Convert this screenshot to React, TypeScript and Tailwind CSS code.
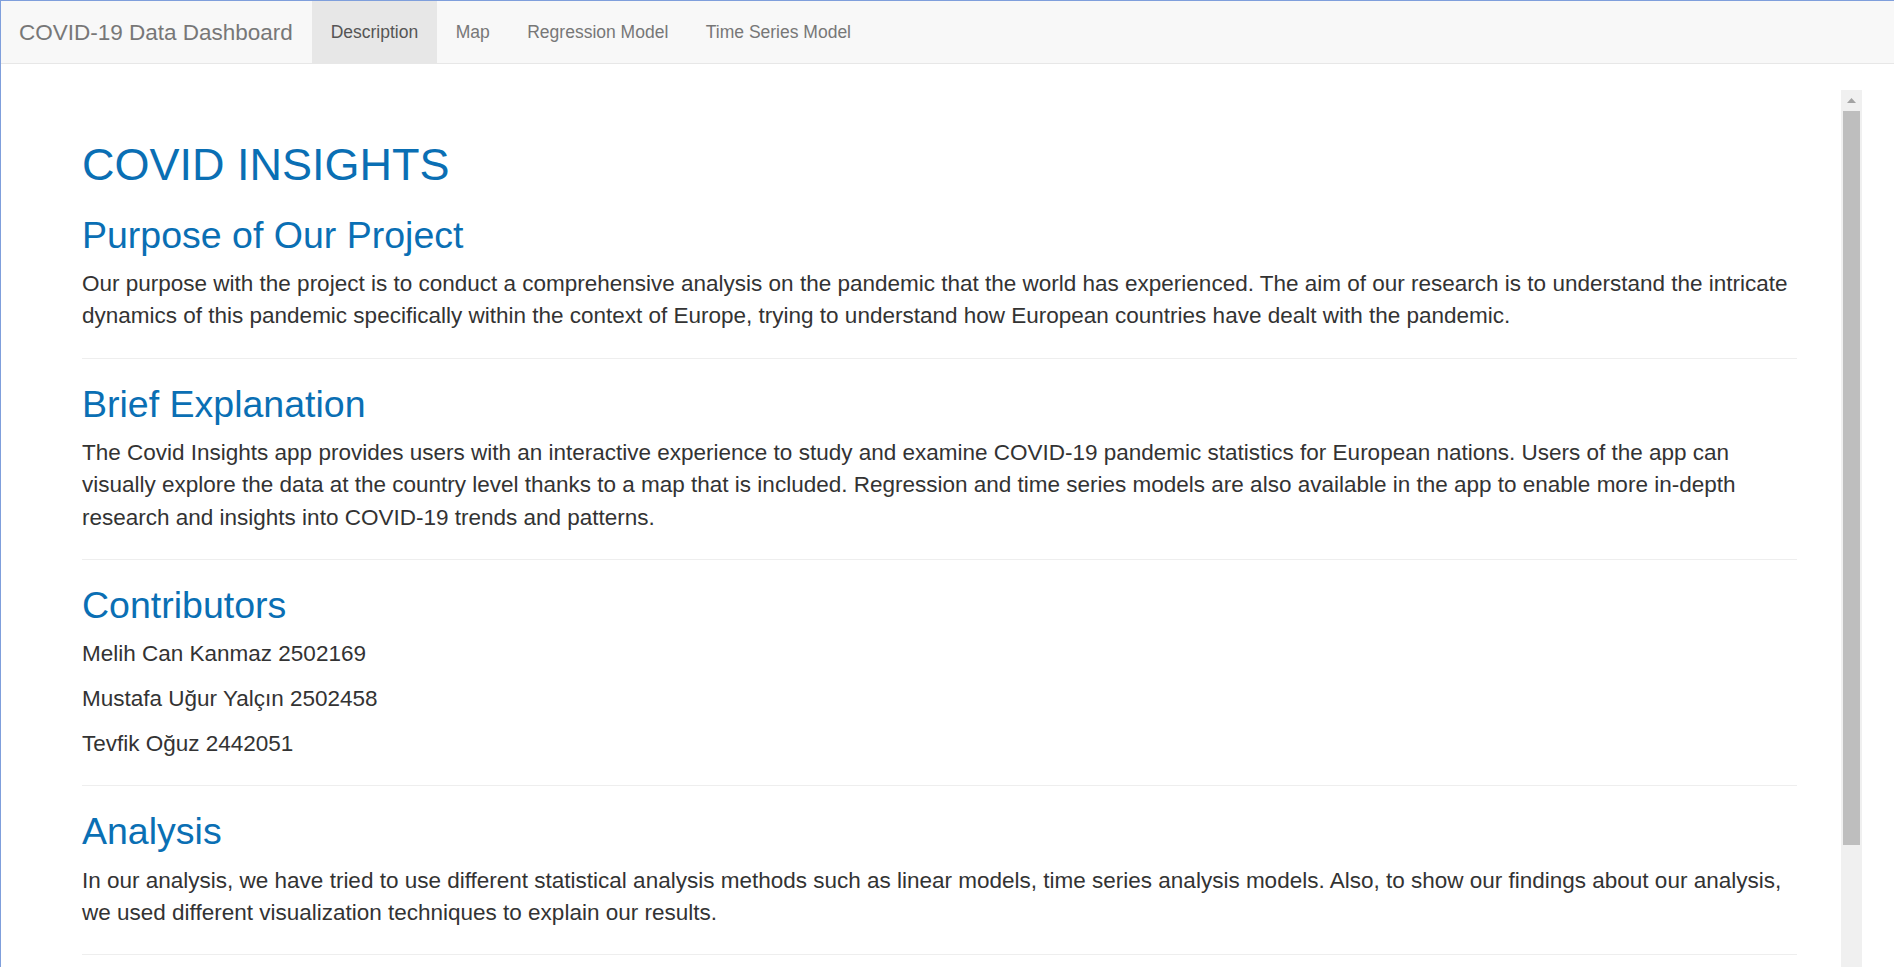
import React from "react";

const tabs = ["Description", "Map", "Regression Model", "Time Series Model"];

function Section({ title, children }: { title: string; children: React.ReactNode }) {
  return (
    <>
      <h2 className="mt-[25px] mb-[12.5px] text-[37.5px] leading-[1.1] font-normal text-[#0a6fb4]">{title}</h2>
      {children}
      <hr className="my-[25px] border-0 border-t border-[#eeeeee]" />
    </>
  );
}

function P({ children }: { children: React.ReactNode }) {
  return <p className="mb-[12.5px] text-[22.5px] leading-[1.42857] text-[#333333]">{children}</p>;
}

export default function App() {
  return (
    <div
      className="h-screen w-full overflow-hidden bg-white flex flex-col border-l border-t border-[#7f9fdc]"
      style={{ fontFamily: '"Liberation Sans", Arial, Helvetica, sans-serif' }}
    >
      <nav className="h-[63px] shrink-0 bg-[#f8f8f8] border-b border-[#e7e7e7] flex items-stretch">
        <div className="pl-[18px] pr-[19px] pt-[18.75px] text-[22.5px] leading-[25px] text-[#777777]">
          COVID-19 Data Dashboard
        </div>
        <ul className="flex items-stretch">
          {tabs.map((t, i) => (
            <li
              key={t}
              className={
                "px-[18.75px] pt-[18.75px] text-[17.5px] leading-[25px] " +
                (i === 0 ? "bg-[#e7e7e7] text-[#555555]" : "text-[#777777]")
              }
            >
              {t}
            </li>
          ))}
        </ul>
      </nav>
      <div className="flex-1 min-h-0 flex pl-[37px] pr-[32px] mt-[26px]">
        <div className="flex-1 min-w-0 overflow-hidden px-[44px] pt-[25px]">
          <h1 className="mt-[25px] mb-[12.5px] text-[45px] leading-[1.1] font-normal text-[#0a6fb4]">COVID INSIGHTS</h1>
          <Section title="Purpose of Our Project">
            <P>
              Our purpose with the project is to conduct a comprehensive analysis on the pandemic that the world has
              experienced. The aim of our research is to understand the intricate dynamics of this pandemic specifically
              within the context of Europe, trying to understand how European countries have dealt with the pandemic.
            </P>
          </Section>
          <Section title="Brief Explanation">
            <P>
              The Covid Insights app provides users with an interactive experience to study and examine COVID-19 pandemic
              statistics for European nations. Users of the app can visually explore the data at the country level thanks
              to a map that is included. Regression and time series models are also available in the app to enable more
              in-depth research and insights into COVID-19 trends and patterns.
            </P>
          </Section>
          <Section title="Contributors">
            <P>Melih Can Kanmaz 2502169</P>
            <P>Mustafa Uğur Yalçın 2502458</P>
            <P>Tevfik Oğuz 2442051</P>
          </Section>
          <Section title="Analysis">
            <P>
              In our analysis, we have tried to use different statistical analysis methods such as linear models, time
              series analysis models. Also, to show our findings about our analysis, we used different visualization
              techniques to explain our results.
            </P>
          </Section>
        </div>
        <div className="w-[21px] shrink-0 bg-[#f0f0f0] flex flex-col">
          <div className="h-[21px] flex items-center justify-center">
            <svg width="9" height="5" viewBox="0 0 9 5">
              <polygon points="4.5,0 9,5 0,5" fill="#a3a3a3" />
            </svg>
          </div>
          <div className="mx-[2px] h-[734px] bg-[#bebebe]" />
        </div>
      </div>
    </div>
  );
}
